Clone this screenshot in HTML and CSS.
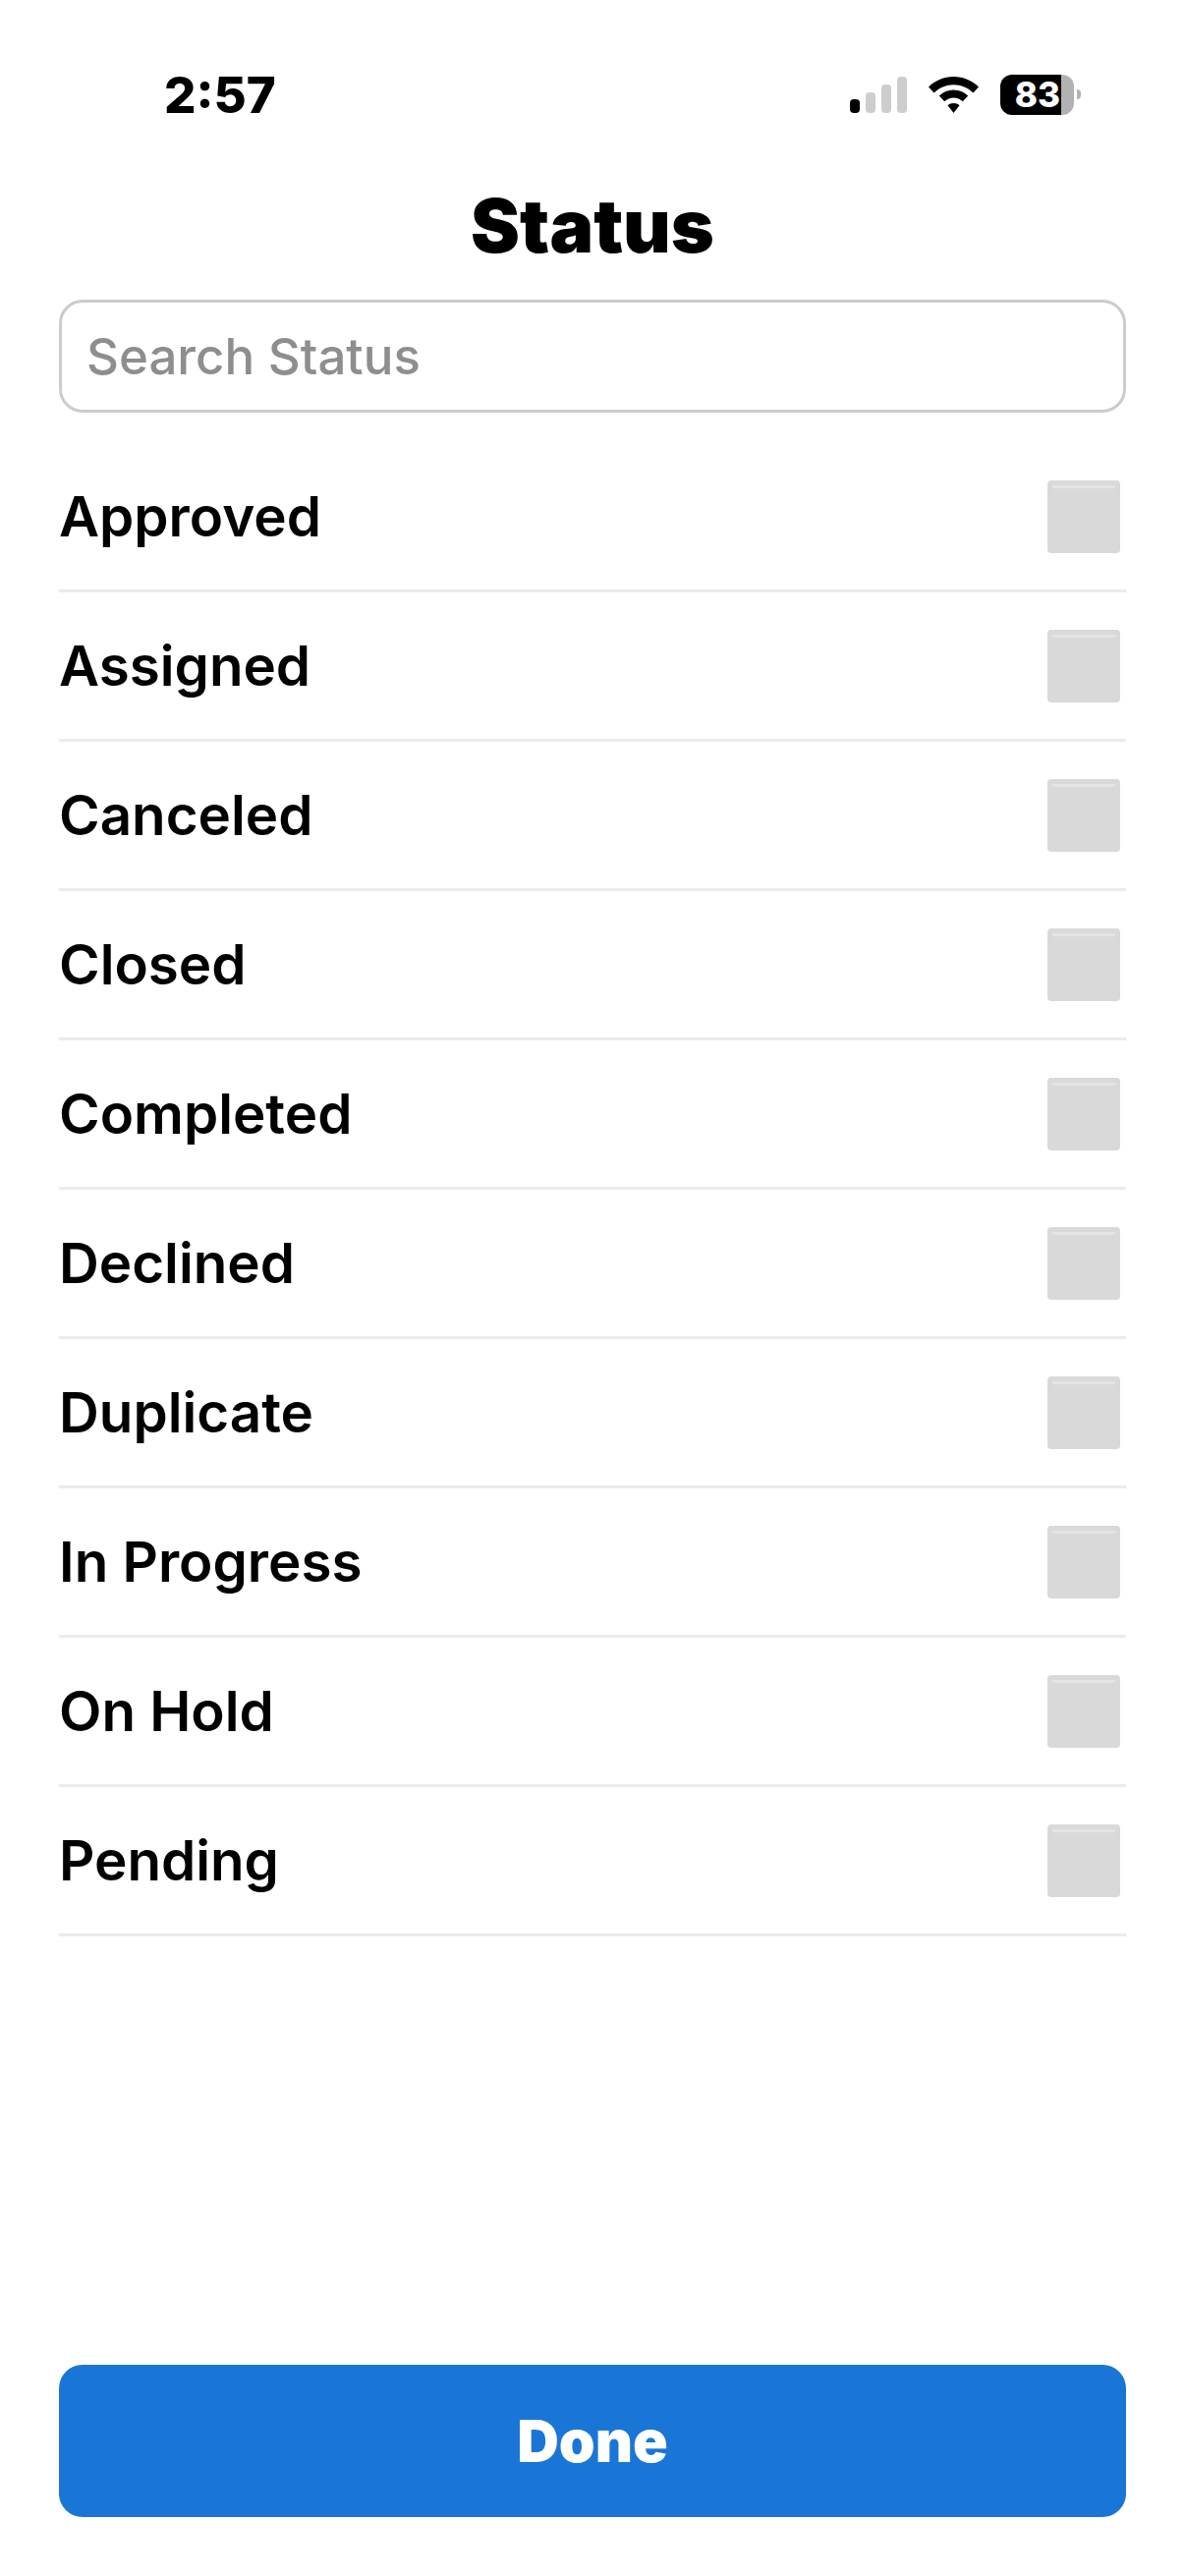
FILE: index.html
```html
<!DOCTYPE html>
<html lang="en">
<head>
  <meta charset="UTF-8">
  <meta name="viewport" content="width=device-width, initial-scale=1.0">
  <title>Status</title>
  <link rel="stylesheet" href="styles.css">
</head>
<body>
  <div class="page">

    <div class="statusbar">
      <span class="time">2:57</span>
      <div class="indicators">
        <div class="signal">
          <span class="bar bar1 on"></span>
          <span class="bar bar2"></span>
          <span class="bar bar3"></span>
          <span class="bar bar4"></span>
        </div>
        <svg class="wifi" width="51" height="37" viewBox="0 0 51 37">
          <path d="M25.5 0C35 0 44 3.800 51 10.500L45.500 16.500C40 11.200 33 8.200 25.500 8.200S11 11.200 5.500 16.500L0 10.500C7 3.800 16 0 25.500 0Z"/>
          <path d="M25.500 13.500C31 13.500 36.200 15.700 40.200 19.500L34.800 25.300C32.200 22.900 29 21.500 25.500 21.500S18.800 22.900 16.200 25.300L10.800 19.500C14.800 15.700 20 13.500 25.500 13.500Z"/>
          <path d="M25.500 27C27.800 27 29.900 27.800 31.500 29.300L25.500 37L19.500 29.300C21.100 27.800 23.200 27 25.500 27Z"/>
        </svg>
        <div class="battery">
          <div class="battery-body">
            <span class="battery-level">83</span>
            <span class="battery-rest"></span>
          </div>
          <span class="battery-nub"></span>
        </div>
      </div>
    </div>

    <h1 class="title">Status</h1>

    <div class="search">Search Status</div>

    <ul class="list">
      <li class="row"><span>Approved</span><span class="check"></span></li>
      <li class="row"><span>Assigned</span><span class="check"></span></li>
      <li class="row"><span>Canceled</span><span class="check"></span></li>
      <li class="row"><span>Closed</span><span class="check"></span></li>
      <li class="row"><span>Completed</span><span class="check"></span></li>
      <li class="row"><span>Declined</span><span class="check"></span></li>
      <li class="row"><span>Duplicate</span><span class="check"></span></li>
      <li class="row"><span>In Progress</span><span class="check"></span></li>
      <li class="row"><span>On Hold</span><span class="check"></span></li>
      <li class="row"><span>Pending</span><span class="check"></span></li>
    </ul>

    <button class="done">Done</button>

  </div>
</body>
</html>
```

FILE: styles.css
```css
* { box-sizing: border-box; }

html, body {
  margin: 0;
  background: #fff;
}

body {
  font-family: Inter, "Liberation Sans", sans-serif;
  color: #000;
}

.page {
  display: flex;
  flex-direction: column;
  width: 1206px;
  height: 2622px;
  padding: 0 60px;
  overflow: hidden;
}

/* status bar */
.statusbar {
  display: flex;
  justify-content: space-between;
  align-items: center;
  height: 84px;
  margin-top: 54px;
  padding: 0 46px 0 107px;
}

.time {
  font-size: 51px;
  font-weight: 800;
  line-height: 1;
}

.indicators {
  display: flex;
  align-items: center;
  gap: 22px;
}

.signal {
  display: flex;
  align-items: flex-end;
  gap: 6px;
  height: 37px;
}

.bar {
  width: 10px;
  border-radius: 4px;
  background: #cdcdcd;
}

.bar.on { background: #000; }
.bar1 { height: 14px; }
.bar2 { height: 21px; }
.bar3 { height: 29px; }
.bar4 { height: 37px; }

.wifi { display: block; }

.battery {
  display: flex;
  align-items: center;
  gap: 3px;
}

.battery-body {
  display: flex;
  width: 75px;
  height: 41px;
}

.battery-level {
  flex: 1;
  padding-right: 1px;
  border-radius: 12px 0 0 12px;
  background: #000;
  color: #fff;
  font-size: 35px;
  font-weight: 800;
  line-height: 41px;
  text-align: right;
}

.battery-rest {
  width: 13px;
  border-radius: 0 12px 12px 0;
  background: #b2b2b2;
}

.battery-nub {
  width: 4px;
  height: 10px;
  border-radius: 0 5px 5px 0;
  background: #b2b2b2;
}

/* header */
.title {
  margin: 48px 0 0;
  font-size: 75px;
  font-weight: 900;
  line-height: 88px;
  text-align: center;
}

.search {
  height: 115px;
  margin-top: 31px;
  padding-left: 25px;
  border: 3px solid #ccc;
  border-radius: 24px;
  color: #8e8e8e;
  font-size: 51px;
  font-weight: 500;
  line-height: 109px;
}

/* list */
.list {
  margin: 31px 0 0;
  padding: 0;
  list-style: none;
}

.row {
  display: flex;
  justify-content: space-between;
  align-items: center;
  height: 152px;
  padding-right: 6px;
  border-bottom: 3px solid #ebebeb;
  font-size: 56.5px;
  font-weight: 600;
}

.check {
  position: relative;
  width: 74px;
  height: 74px;
  border-radius: 4px;
  background: #d9d9d9;
}

.check::before {
  content: "";
  position: absolute;
  top: 5px;
  left: 5px;
  right: 5px;
  height: 3px;
  background: #e4e4e4;
}

/* footer */
.done {
  height: 155px;
  margin-top: auto;
  margin-bottom: 60px;
  border: none;
  border-radius: 24px;
  background: #1a76d6;
  color: #fff;
  font-family: inherit;
  font-size: 59px;
  font-weight: 900;
}
```
